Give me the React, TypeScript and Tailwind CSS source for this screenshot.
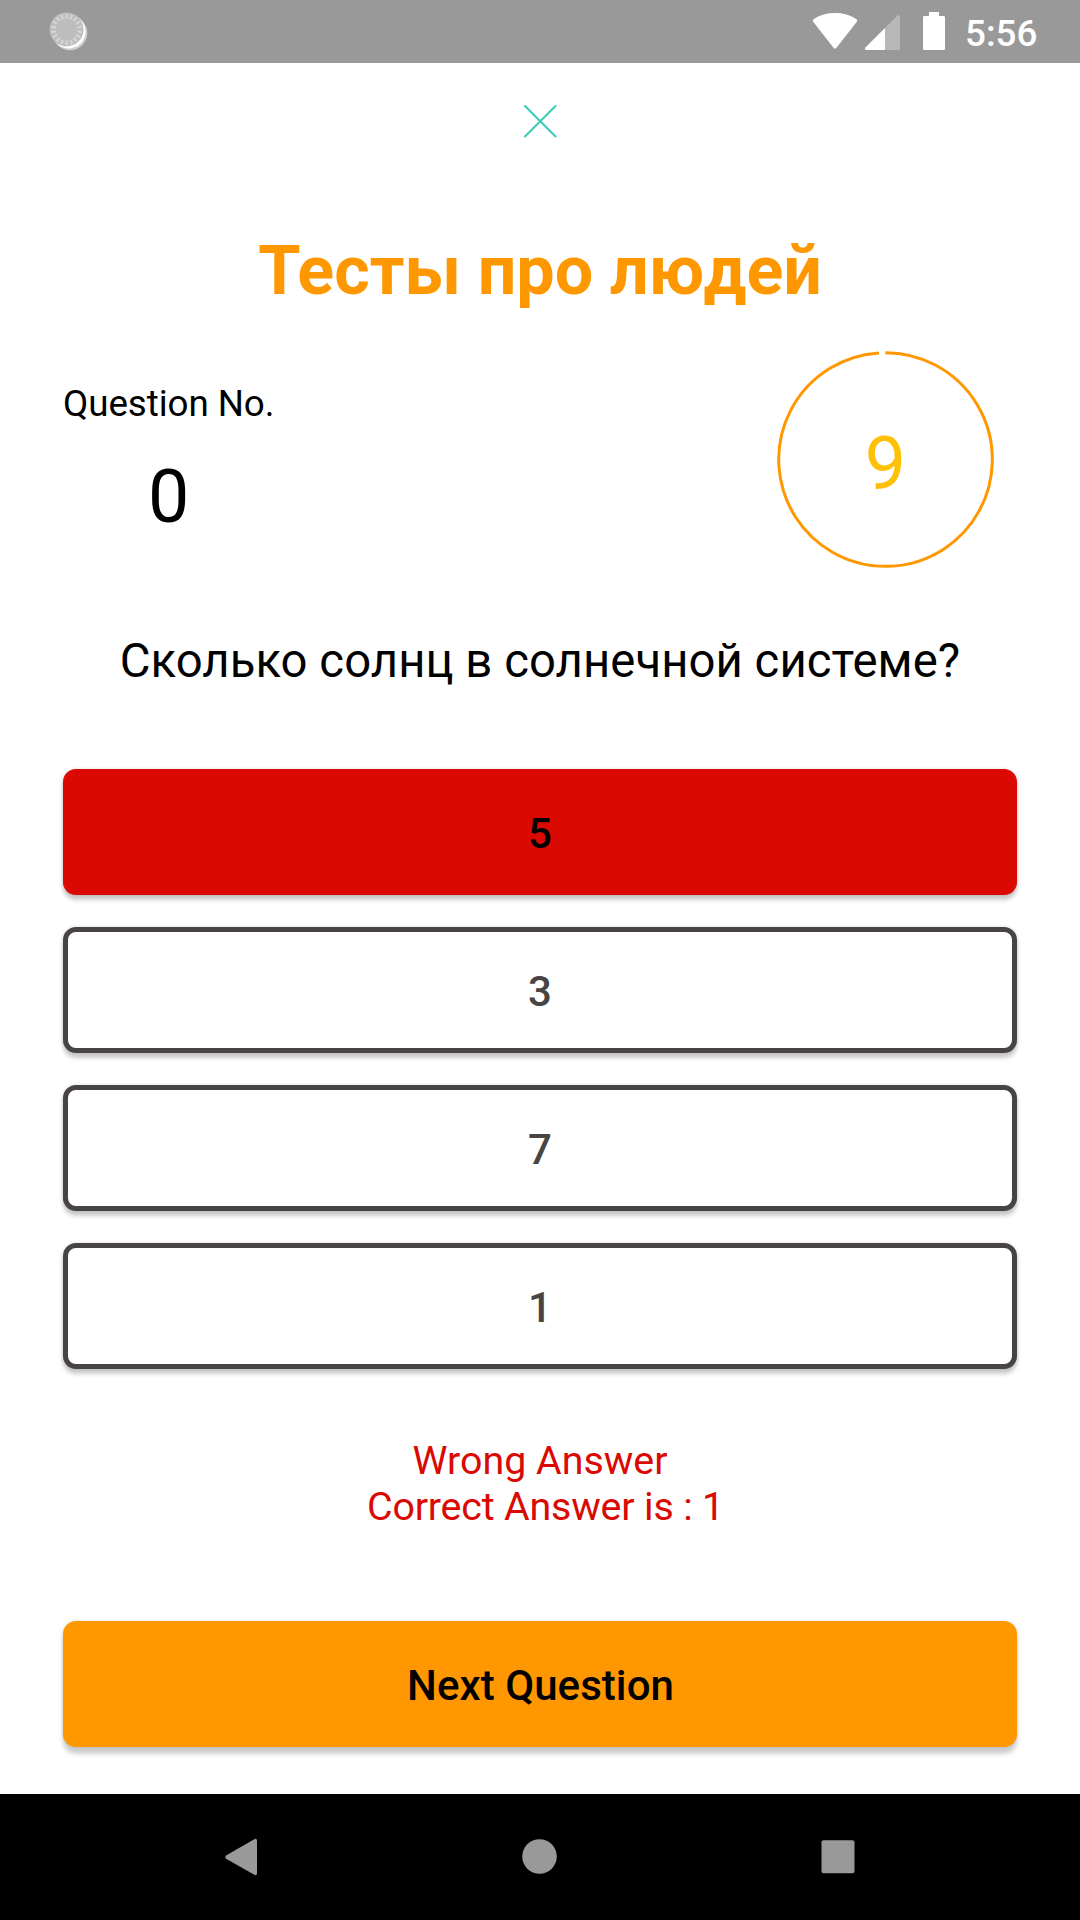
const answers = [
  { label: "5", wrong: true },
  { label: "3", wrong: false },
  { label: "7", wrong: false },
  { label: "1", wrong: false },
];

const tickAngles = Array.from({ length: 18 }, (_, i) => i * 20);

function StatusBar() {
  return (
    <header className="flex h-[63px] shrink-0 items-center justify-between bg-[#999999] pl-[49px]">
      <svg width="39" height="40" viewBox="49 12 39 40">
        <circle cx="70" cy="33" r="17.3" fill="#cfcfcf" />
        <circle cx="68.6" cy="31.4" r="17" fill="#ffffff" />
        <circle cx="66.6" cy="29.4" r="17" fill="#bdbdbd" />
        {tickAngles.map((a) => (
          <path key={a} d="M66.6 13.6v5" stroke="#d4d4d4" strokeWidth="2.2" transform={`rotate(${a} 66.6 29.4)`} />
        ))}
      </svg>
      <div className="flex h-full">
        <svg width="150" height="63" viewBox="805 0 150 63">
          <path
            d="M813 21.5Q812 20 813.8 18.9Q823 13 835 13T856.2 18.9Q858 20 857 21.5L836.3 48Q835 49.6 833.7 48Z"
            fill="#fff"
          />
          <path d="M866.5 50Q864 49.6 865.5 47.4L897.5 15.5Q900 14 900 16.5V48.5Q900 50 898.5 50Z" fill="#b8b8b8" />
          <path d="M885 28V50H866.5Q864 49.6 865.5 47.4Z" fill="#fff" />
          <path d="M929 12H939V16H943.7Q945 16 945 17.3V48.7Q945 50 943.7 50H924.3Q923 50 923 48.7V17.3Q923 16 924.3 16H929Z" fill="#fff" />
        </svg>
        <span className="mt-[12px] w-[125px] text-[36.75px] font-medium leading-[43px] text-white pl-[10px]">5:56</span>
      </div>
    </header>
  );
}

function Countdown() {
  return (
    <div className="relative mr-[86px] flex h-[218px] w-[217px] items-center justify-center">
      <svg className="absolute inset-0" width="217" height="218" viewBox="777 350.5 217 218">
        <path d="M885.3 353.2A106.8 106.8 0 1 1 879 353.4" fill="none" stroke="#ff9800" strokeWidth="3" />
      </svg>
      <span className="mt-[10px] text-[73.5px] leading-[86px] text-[#ffc107]">9</span>
    </div>
  );
}

export default function App() {
  return (
    <div className="flex h-[1920px] w-[1080px] flex-col overflow-hidden bg-white font-[Roboto,sans-serif] text-black">
      <StatusBar />
      <main className="flex flex-1 flex-col">
        <button className="mt-[42px] flex h-[33px] justify-center" aria-label="Close">
          <svg width="34" height="33" viewBox="0 0 34 33">
            <path d="M2 1L32.5 31.5M32.5 1L2 31.5" stroke="#35cbb8" strokeWidth="1.9" strokeLinecap="round" fill="none" />
          </svg>
        </button>
        <h1 className="mt-[93px] text-center text-[68.25px] font-bold leading-[80px] tracking-[-0.07px] text-[#ff9800]">
          Тесты про людей
        </h1>

        <section className="mt-[39px] flex h-[218px] justify-between pl-[63px]">
          <div className="flex flex-col items-center pt-[32px]">
            <span className="text-[36.75px] leading-[43px] tracking-[-0.07px]">Question No.</span>
            <span className="mt-[29px] text-[73.5px] leading-[86px]">0</span>
          </div>
          <Countdown />
        </section>

        <p className="mt-[66px] text-center text-[47.25px] leading-[55px] tracking-[0.06px]">
          Сколько солнц в солнечной системе?
        </p>

        <section className="mt-[80px] flex flex-col gap-[32px] px-[63px]">
          {answers.map((a) => (
            <button
              key={a.label}
              className={
                "flex h-[126px] items-center justify-center rounded-[13px] pt-[2px] text-[42px] font-medium shadow-[0_5px_4px_rgba(0,0,0,0.2),0_0_4px_rgba(0,0,0,0.12)] " +
                (a.wrong ? "bg-[#da0902] text-black" : "border-[5px] border-[#484443] bg-white text-[#484443]")
              }
            >
              {a.label}
            </button>
          ))}
        </section>

        <div className="mt-[69px] text-center text-[39.375px] leading-[46px] text-[#da0902]">
          <p>Wrong Answer</p>
          <p className="pl-[11px] tracking-[-0.18px]">Correct Answer is : 1</p>
        </div>

        <button className="mx-[63px] mt-[91px] flex h-[126px] items-center justify-center rounded-[13px] bg-[#ff9800] pl-[1px] pt-[2px] text-[42px] font-medium tracking-[0.06px] shadow-[0_7px_4px_rgba(0,0,0,0.19),0_0_4px_rgba(0,0,0,0.12)]">
          Next Question
        </button>
      </main>

      <nav className="flex h-[126px] shrink-0 items-center justify-between bg-black pl-[225px] pr-[225px]">
        <svg width="33" height="38" viewBox="225 1838 33 38" fill="#999999">
          <path d="M226 1858.8Q224.6 1857 226 1855.4L254.3 1839.2Q256.8 1838 257 1840.4V1873.8Q256.8 1876 254.3 1874.8Z" />
        </svg>
        <svg width="35" height="36" viewBox="522 1839 35 36" fill="#999999">
          <circle cx="539.5" cy="1856.5" r="17.3" />
        </svg>
        <svg width="34" height="34" viewBox="0 0 34 34" fill="#999999">
          <rect x="0.5" y="0.3" width="33" height="33" rx="2" />
        </svg>
      </nav>
    </div>
  );
}
